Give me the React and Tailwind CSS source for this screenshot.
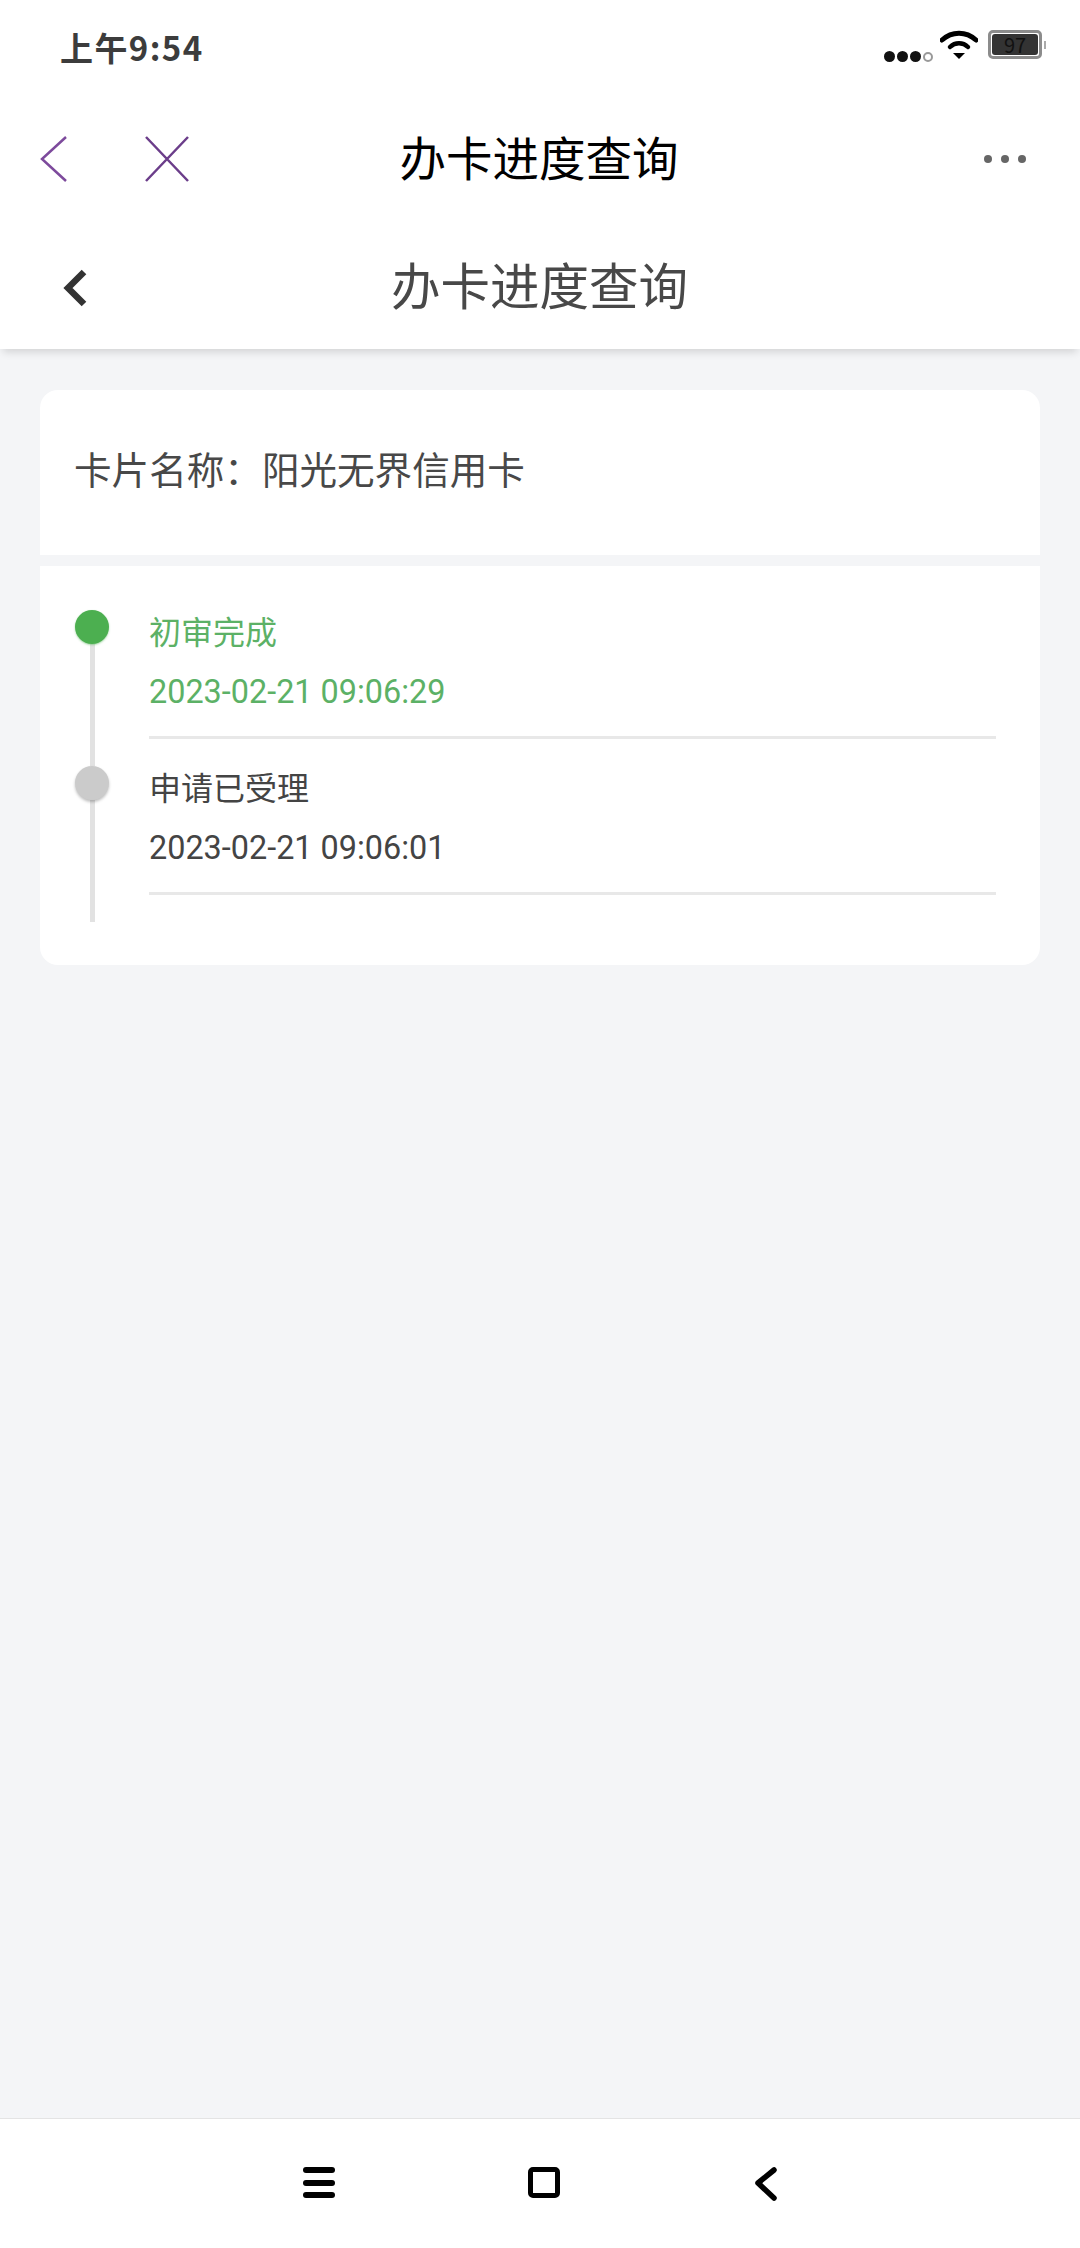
import React from "react";

const cjk = { fontFamily: '"Noto Sans CJK SC", sans-serif' };
const steps = [
  { title: "初审完成", time: "2023-02-21 09:06:29", active: true },
  { title: "申请已受理", time: "2023-02-21 09:06:01", active: false },
];

function StatusBar() {
  return (
    <div className="flex h-[88px] items-start justify-between bg-white pl-[60px] pr-[34px]">
      <span className="mt-[26px] text-[33px] font-semibold leading-[42px] tracking-[1.4px] text-[#3c3c3c]">上午9:54</span>
      <div className="mt-[30px] flex items-start">
        <div className="mt-[21px] flex items-center gap-[2px]">
          <span className="h-[11px] w-[11px] rounded-full bg-[#111]" />
          <span className="h-[11px] w-[11px] rounded-full bg-[#111]" />
          <span className="h-[11px] w-[11px] rounded-full bg-[#111]" />
          <span className="h-[10px] w-[10px] rounded-full border-2 border-[#999]" />
        </div>
        <svg className="ml-[7px]" width="38" height="30" viewBox="0 0 38 30">
          <path d="M2 10 C12 1 26 1 36 10" fill="none" stroke="#000" strokeWidth="5" strokeLinecap="round" />
          <path d="M10 17 C15 12 23 12 28 17" fill="none" stroke="#000" strokeWidth="4.5" strokeLinecap="round" />
          <path d="M13 23 L25 23 L19 29 Z" fill="#000" />
        </svg>
        <div className="ml-[10px] flex items-center">
          <div className="flex h-[29px] w-[54px] items-center justify-center rounded-[5px] border-[3px] border-[#8c8c8c] p-[1px]">
            <div className="flex h-full w-full items-center justify-center rounded-[3px] bg-[#333] text-[20px] leading-none text-[#111]">
              97
            </div>
          </div>
          <span className="ml-[2px] h-[8px] w-[2px] bg-[#aaa]" />
        </div>
      </div>
    </div>
  );
}

function TopNav() {
  return (
    <div className="grid h-[142px] grid-cols-[1fr_auto_1fr] items-center bg-white pl-[40px] pr-[54px]">
      <div className="flex items-center">
        <svg width="28" height="46" viewBox="0 0 28 46">
          <path d="M26 1 L2 23 L26 45" fill="none" stroke="#7d4a9c" strokeWidth="2.5" />
        </svg>
        <svg className="ml-[77px]" width="44" height="46" viewBox="0 0 44 46">
          <path d="M1 1 L43 45 M43 1 L1 45" fill="none" stroke="#6b3d8a" strokeWidth="2.5" />
        </svg>
      </div>
      <span className="pb-[5px] pl-[12px] text-center text-[46.5px] leading-none text-black">办卡进度查询</span>
      <div className="flex items-center justify-end gap-[9px]">
        <span className="h-[8px] w-[8px] rounded-full bg-[#666]" />
        <span className="h-[8px] w-[8px] rounded-full bg-[#666]" />
        <span className="h-[8px] w-[8px] rounded-full bg-[#666]" />
      </div>
    </div>
  );
}

function PageHeader() {
  return (
    <div className="relative z-10 flex h-[119px] items-center bg-white pb-[3px] pl-[62px] shadow-[0_6px_8px_-3px_rgba(0,0,0,0.14)]">
      <svg width="26" height="38" viewBox="0 0 26 38">
        <path d="M22 3 L6 19 L22 35" fill="none" stroke="#333" strokeWidth="6.5" />
      </svg>
      <span className="flex-1 pb-[8px] pr-[89px] text-center text-[49.5px] leading-none text-[#484848]">办卡进度查询</span>
    </div>
  );
}

function Step({ step }) {
  const dot = step.active ? "bg-[#4caf50] shadow-[0_1px_2px_rgba(76,175,80,0.5)]" : "bg-[#cbcbcb] shadow-[0_2px_3px_rgba(0,0,0,0.25)]";
  const text = step.active ? "text-[#5cb166]" : "text-[#444]";
  return (
    <div className="flex h-[156px]">
      <div className="flex w-[34px] flex-col items-center">
        <span className={`relative h-[34px] w-[34px] shrink-0 rounded-full ${dot}`} />
        <span className="w-[5px] flex-1 bg-[#e2e2e2]" />
      </div>
      <div className="ml-[40px] mr-[44px] flex-1">
        <div className={`border-b-[3px] border-[#e8e8e8] pb-[22px] ${text}`}>
          <div className="-mt-[2px] text-[32px] leading-[44px]" style={cjk}>{step.title}</div>
          <div className="mt-[18px] text-[32.4px] leading-[44px]" style={{ fontFamily: "Roboto, sans-serif" }}>{step.time}</div>
        </div>
      </div>
    </div>
  );
}

function BottomNav() {
  return (
    <div className="flex h-[130px] items-start border-t border-[#e4e4e4] bg-white pl-[303px] pt-[48px]">
      <div className="flex h-[31px] w-[32px] flex-col justify-between">
        <span className="h-[6px] rounded-full bg-black" />
        <span className="h-[6px] rounded-full bg-black" />
        <span className="h-[6px] rounded-full bg-black" />
      </div>
      <div className="ml-[193px] h-[31px] w-[32px] rounded-[5px] border-[5px] border-black" />
      <svg className="ml-[193px]" width="26" height="34" viewBox="0 0 26 34">
        <path d="M21 3 L5 16 L21 31" fill="none" stroke="#000" strokeWidth="5.5" strokeLinecap="round" strokeLinejoin="round" />
      </svg>
    </div>
  );
}

export default function App() {
  return (
    <div className="flex h-[2248px] w-[1080px] flex-col overflow-hidden bg-[#f4f5f7]" style={cjk}>
      <StatusBar />
      <TopNav />
      <PageHeader />
      <main className="flex-1 px-[40px] pt-[41px]">
        <div className="overflow-hidden rounded-[18px]">
          <div className="flex h-[165px] items-center bg-white pb-[9px] pl-[34px] text-[37.6px] text-[#484848]">
            卡片名称：阳光无界信用卡
          </div>
          <div className="mt-[11px] bg-white pb-[43px] pl-[35px] pt-[44px]">
            {steps.map((s) => (
              <Step key={s.time} step={s} />
            ))}
          </div>
        </div>
      </main>
      <BottomNav />
    </div>
  );
}
